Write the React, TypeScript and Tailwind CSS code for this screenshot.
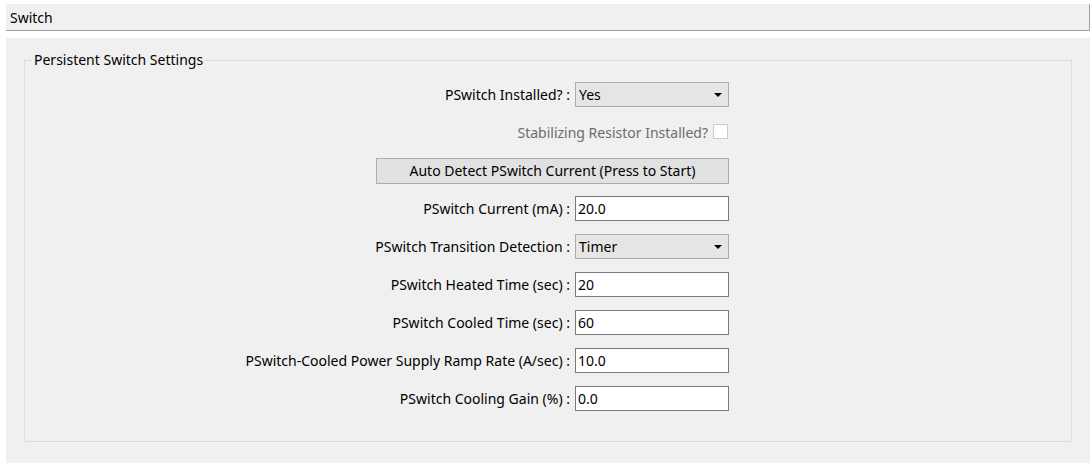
import { ReactNode } from "react";

const font = { fontFamily: '"Noto Sans", "Open Sans", sans-serif' };

function Row({ label, children, muted }: { label: string; children: ReactNode; muted?: boolean }) {
  return (
    <div className="flex h-[25px] items-center justify-end gap-[5px]">
      <span className={`text-[14px] leading-none whitespace-nowrap ${muted ? "text-[#6d6d6d]" : "text-black"}`}>
        {label}
      </span>
      {children}
    </div>
  );
}

function Select({ value }: { value: string }) {
  return (
    <div className="flex h-[25px] w-[154px] items-center justify-between border border-[#adadad] bg-[#e5e5e5] pl-[3px] pr-[6px] text-[14px] text-black">
      <span>{value}</span>
      <svg width="8" height="4" viewBox="0 0 8 4">
        <path d="M0 0h8L4 4z" fill="#000" />
      </svg>
    </div>
  );
}

function TextBox({ value }: { value: string }) {
  return (
    <div className="flex h-[25px] w-[154px] items-center border border-[#7a7a7a] bg-white pl-[2px] text-[14px] text-black">
      {value}
    </div>
  );
}

export default function App() {
  return (
    <div className="h-[463px] w-[1092px] overflow-hidden bg-white" style={font}>
      <div className="mx-[6px] mt-[4px] flex h-[27px] w-[1084px] items-center border-r border-b border-[#a0a0a0] bg-[#f0f0f0] px-[4px] text-[14px] text-black">
        Switch
      </div>
      <div className="mx-[6px] mt-[7px] h-[425px] w-[1084px] bg-[#f0f0f0] px-[18px] pt-[12px]">
        <fieldset className="border border-[#dcdcdc] pr-[342px] pt-[12px] pb-[30px]">
          <legend className="ml-[7px] px-[2px] text-[14px] leading-[20px] text-black">
            Persistent Switch Settings
          </legend>
          <div className="flex flex-col gap-[13px]">
            <Row label="PSwitch Installed? :">
              <Select value="Yes" />
            </Row>
            <Row label="Stabilizing Resistor Installed?" muted>
              <div className="mr-[1px] mb-[3px] h-[15px] w-[15px] border border-[#cccccc] bg-white" />
            </Row>
            <div className="flex h-[25px] items-center justify-end">
              <button className="h-[26px] w-[353px] border border-[#adadad] bg-[#e1e1e1] text-[14px] text-black">
                Auto Detect PSwitch Current (Press to Start)
              </button>
            </div>
            <Row label="PSwitch Current (mA) :">
              <TextBox value="20.0" />
            </Row>
            <Row label="PSwitch Transition Detection :">
              <Select value="Timer" />
            </Row>
            <Row label="PSwitch Heated Time (sec) :">
              <TextBox value="20" />
            </Row>
            <Row label="PSwitch Cooled Time (sec) :">
              <TextBox value="60" />
            </Row>
            <Row label="PSwitch-Cooled Power Supply Ramp Rate (A/sec) :">
              <TextBox value="10.0" />
            </Row>
            <Row label="PSwitch Cooling Gain (%) :">
              <TextBox value="0.0" />
            </Row>
          </div>
        </fieldset>
      </div>
    </div>
  );
}
